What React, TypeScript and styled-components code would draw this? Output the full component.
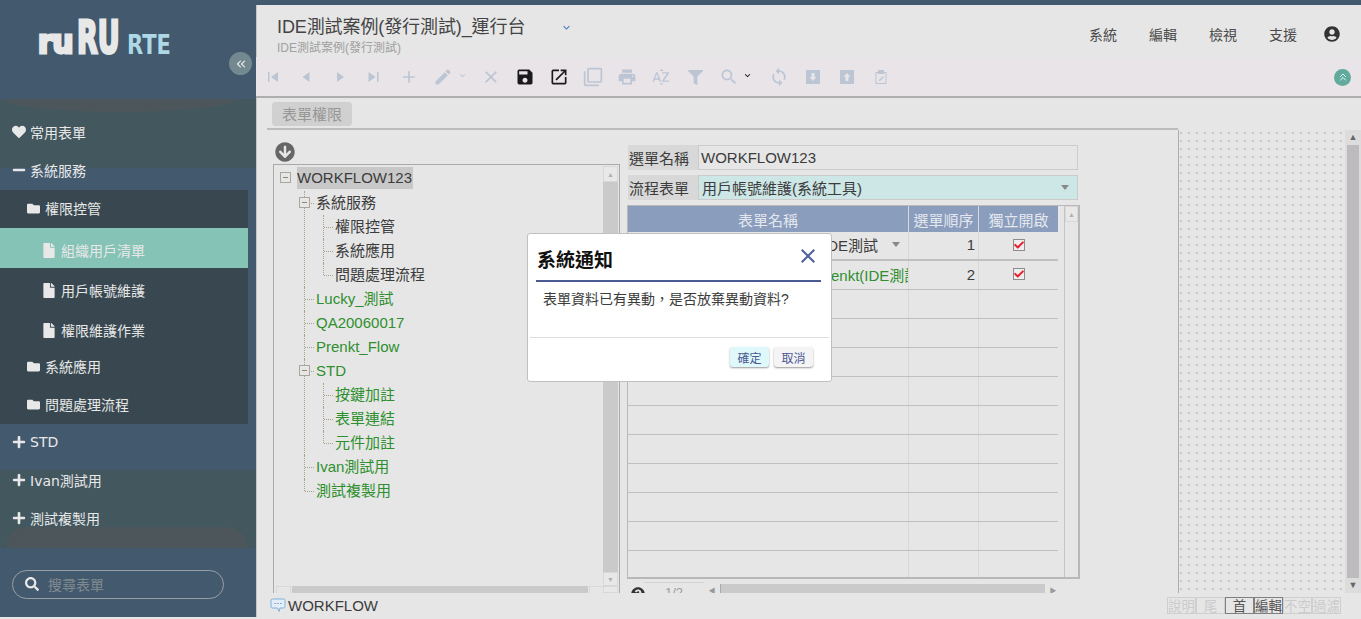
import React from "react";
import styled, { createGlobalStyle } from "styled-components";
import { ChevronsLeft, ChevronsUp } from "lucide-react";
import {
  FaCheck,
  FaFile,
  FaFilter,
  FaFolder,
  FaHeart,
  FaMinus,
  FaPlus,
  FaSearch,
  FaUserCircle,
  FaArrowCircleDown,
  FaQuestionCircle,
} from "react-icons/fa";
import {
  MdAdd,
  MdClose,
  MdEdit,
  MdFilterNone,
  MdKeyboardArrowDown,
  MdOpenInNew,
  MdPrint,
  MdSave,
  MdSearch,
  MdSortByAlpha,
  MdSync,
} from "react-icons/md";

const FONT = `"Liberation Sans", "Noto Sans CJK TC", sans-serif`;

const GlobalStyle = createGlobalStyle`
  html, body {
    margin: 0;
    padding: 0;
    background: #e6e6e6;
    overflow: hidden;
  }
  * {
    box-sizing: border-box;
  }
  body {
    font-family: ${FONT};
  }
`;

const Page = styled.div`
  display: flex;
  width: 1361px;
  height: 617px;
  position: relative;
  overflow: hidden;
`;

/* ---------- sidebar ---------- */

const Sidebar = styled.aside`
  width: 256px;
  flex: none;
  display: flex;
  flex-direction: column;
  background: #43596e;
  color: #e8e8e8;
`;

const SideHead = styled.div`
  height: 99px;
  flex: none;
  position: relative;
`;

const LogoSvg = styled.svg`
  display: block;
`;

const CollapseButton = styled.div`
  position: absolute;
  left: 229px;
  top: 52px;
  width: 23px;
  height: 23px;
  border-radius: 50%;
  background: #74888f;
  color: #e8e8e8;
  display: flex;
  align-items: center;
  justify-content: center;
`;

const Menu = styled.nav`
  flex: none;
  height: 449px;
  padding-top: 15px;
  position: relative;
  background: linear-gradient(
    to bottom,
    #43575f 0,
    #43575f 69px,
    #43596e 69px,
    #43596e 371px,
    #43575f 371px,
    #43575f 100%
  );

  &::before {
    content: "";
    position: absolute;
    left: 4px;
    right: 20px;
    top: 0;
    height: 13px;
    background: #4d565a;
    border-radius: 0 0 50% 50% / 0 0 100% 100%;
  }

  &::after {
    content: "";
    position: absolute;
    left: 6px;
    right: 8px;
    bottom: 0;
    height: 21px;
    background: #4d565a;
    border-radius: 40px 40px 0 0;
  }
`;

const TopItem = styled.div`
  height: 38px;
  display: flex;
  align-items: center;
  padding: 0 0 2px 12px;
  gap: 4px;
  font-size: 14px;
  font-family: "DejaVu Sans", "Noto Sans CJK TC", sans-serif;
  position: relative;
  z-index: 1;

  svg {
    width: 14px;
    height: 14px;
    flex: none;
  }
`;

const SubPanel = styled.div`
  width: 248px;
  background: #394850;
`;

const FolderItem = styled.div`
  height: 38px;
  display: flex;
  align-items: center;
  padding: 0 0 2px 27px;
  gap: 5px;
  font-size: 14px;

  svg {
    width: 13px;
    height: 13px;
    flex: none;
  }
`;

const LeafItem = styled.div<{ $active?: boolean }>`
  height: 40px;
  padding: 4px 0 0 42px;
  display: flex;
  align-items: center;
  gap: 5px;
  font-size: 14px;
  background: ${(p) => (p.$active ? "#84c3b5" : "transparent")};

  svg {
    width: 14px;
    height: 15px;
    flex: none;
  }
`;

const SearchBox = styled.div`
  margin: 22px 0 0 12px;
  width: 212px;
  height: 29px;
  border: 1px solid #99a0a5;
  border-radius: 15px;
  display: flex;
  align-items: center;
  padding: 0 0 2px 12px;
  gap: 9px;
  font-size: 14px;
  color: #808a90;

  svg {
    color: #e8e8e8;
    width: 14px;
    height: 14px;
  }
`;

/* ---------- main ---------- */

const Main = styled.main`
  flex: 1;
  min-width: 0;
  display: flex;
  flex-direction: column;
  background: #e6e6e6;
  border-left: 1px solid #c4c4c4;
`;

const Stripe = styled.div`
  height: 5px;
  flex: none;
  margin-left: -1px;
  background: #43596e;
`;

const Header = styled.header`
  height: 52px;
  flex: none;
  display: flex;
  align-items: flex-start;
  justify-content: space-between;
  padding: 11px 21px 0 20px;
`;

const TitleBlock = styled.div`
  display: flex;
  flex-direction: column;
  gap: 2px;
`;

const TitleRow = styled.div`
  display: flex;
  align-items: center;
  gap: 35px;
  font-size: 18px;
  letter-spacing: -0.1px;
  line-height: 22px;
  color: #444;

  svg {
    color: #4a7fb0;
    font-size: 13px;
  }
`;

const Subtitle = styled.div`
  font-size: 12px;
  line-height: 16px;
  color: #a0a0a0;
`;

const TopNav = styled.div`
  display: flex;
  align-items: center;
  gap: 32px;
  padding-top: 8px;
  font-size: 14px;
  color: #4a4a4a;
`;

const UserIcon = styled(FaUserCircle)`
  font-size: 16px;
  color: #333;
  margin-left: -5px;
`;

const Toolbar = styled.div`
  height: 41px;
  flex: none;
  display: flex;
  align-items: center;
  margin-left: -1px;
  background: #e8e4e8;
  border-bottom: 2px solid #aeaeae;
  padding-top: 1px;
`;

const ToolButton = styled.div<{ $width?: number; $on?: boolean }>`
  width: ${(p) => p.$width ?? 34}px;
  flex: none;
  height: 22px;
  display: flex;
  align-items: center;
  justify-content: ${(p) => (p.$width ? "flex-start" : "center")};
  padding-left: ${(p) => (p.$width ? 7 : 0)}px;
  font-size: 20px;
  color: ${(p) => (p.$on ? "#1a1a1a" : "#bcc5d3")};
`;

const Caret = styled(MdKeyboardArrowDown)<{ $dark?: boolean }>`
  font-size: 11px;
  margin-left: ${(p) => (p.$dark ? 3 : 4)}px;
  margin-top: -3px;
  color: ${(p) => (p.$dark ? "#111" : "#bcc5d3")};
`;

const FoldButton = styled.div`
  margin-left: auto;
  margin-right: 10px;
  width: 17px;
  height: 17px;
  border-radius: 50%;
  background: #62aa9c;
  color: #dff;
  display: flex;
  align-items: center;
  justify-content: center;
`;

const TabRow = styled.div`
  height: 32px;
  flex: none;
  margin-left: 10px;
  width: 911px;
  padding: 4px 0 0 5px;
  border-bottom: 2px solid #bcbcbc;
`;

const Tab = styled.div`
  width: 80px;
  height: 24px;
  padding-bottom: 1px;
  background: #d0d0d0;
  border-radius: 4px;
  color: #969696;
  font-size: 15px;
  display: flex;
  align-items: center;
  justify-content: center;
`;

const Body = styled.div`
  height: 463px;
  flex: none;
  display: flex;
  overflow: hidden;
`;

const Workspace = styled.div`
  width: 921px;
  flex: none;
  display: flex;
  padding-left: 16px;
  gap: 7px;
`;

const TreeColumn = styled.div`
  width: 347px;
  flex: none;
  display: flex;
  flex-direction: column;
`;

const DownloadIcon = styled(FaArrowCircleDown)`
  flex: none;
  margin: 12px 0 2px 2px;
  font-size: 20px;
  color: #666;
`;

const TreeBox = styled.div`
  flex: 1;
  height: 440px;
  border: 1px solid #aaa;
  border-bottom: none;
  display: flex;
  position: relative;
`;

const TreeScroll = styled.div`
  flex: 1;
  padding-top: 1px;
`;

const VScroll = styled.div`
  width: 15px;
  flex: none;
  margin: 1px 1px 0 0;
  display: flex;
  flex-direction: column;
  background: #e6e6e6;
`;

const ScrollBtn = styled.div<{ $h?: number }>`
  height: ${(p) => p.$h ?? 16}px;
  flex: none;
  background: #e8e8e8;
  border: 1px solid #d8d8d8;
  display: flex;
  align-items: center;
  justify-content: center;
  color: #b0b0b0;
  font-size: 7px;
  line-height: 1;
`;

const ScrollThumb = styled.div`
  flex: 1;
  background: #cacaca;
`;

const HScroll = styled.div`
  position: absolute;
  left: 2px;
  right: 15px;
  bottom: 0;
  height: 7px;
  display: flex;
`;

const HEnd = styled.div`
  width: 15px;
  flex: none;
  border: 1px solid #d8d8d8;
  border-bottom: none;
`;

const HThumb = styled.div`
  flex: 1;
  background: #cacaca;
  margin: 0 1px;
`;

const TreeRoot = styled.ul`
  list-style: none;
  margin: 0;
  padding: 0 0 0 23px;
  font-size: 15px;
`;

const RootNode = styled.li`
  position: relative;
`;

const Branch = styled.ul<{ $indent: number }>`
  list-style: none;
  margin: 0 0 0 ${(p) => p.$indent}px;
  padding: 0;
`;

const Node = styled.li`
  position: relative;
  padding-left: 12px;

  &::before {
    content: "";
    position: absolute;
    left: 0;
    top: 0;
    bottom: 0;
    border-left: 1px dotted #a6a28e;
  }

  &:last-child::before {
    bottom: auto;
    height: 12px;
  }

  &::after {
    content: "";
    position: absolute;
    left: 1px;
    top: 12px;
    width: 9px;
    border-top: 1px dotted #a6a28e;
  }
`;

const NodeLabel = styled.div<{ $green?: boolean }>`
  height: 24px;
  line-height: 24px;
  white-space: nowrap;
  color: ${(p) => (p.$green ? "#2e8f2e" : "#3c3c3c")};
`;

const RootLabel = styled.span`
  display: inline-block;
  height: 22px;
  line-height: 22px;
  margin: 1px 0 2px;
  background: #c8c8c8;
  color: #3c3c3c;
  padding-right: 1px;
`;

const Expander = styled.span<{ $root?: boolean }>`
  position: absolute;
  z-index: 1;
  left: ${(p) => (p.$root ? -17 : -5)}px;
  top: 6px;
  width: 11px;
  height: 11px;
  background: #e6e6e6;
  border: 1px solid #aaa69a;

  &::after {
    content: "";
    position: absolute;
    left: 2px;
    right: 2px;
    top: 4px;
    border-top: 1px solid #8a867a;
  }
`;

const FormColumn = styled.div`
  width: 453px;
  flex: none;
  padding-top: 15px;
  display: flex;
  flex-direction: column;
`;

const FieldRow = styled.div`
  display: flex;
  flex: none;
  height: 25px;
  margin: 0 2px 5px 1px;
  font-size: 15px;
  color: #3c3c3c;
`;

const FieldLabel = styled.div`
  width: 70px;
  flex: none;
  background: #d8d8d8;
  display: flex;
  align-items: center;
  padding: 0 0 1px 1px;
`;

const FieldValue = styled.div<{ $select?: boolean }>`
  flex: 1;
  border: 1px solid #cbcbcb;
  background: ${(p) => (p.$select ? "#cde6e6" : "transparent")};
  display: flex;
  align-items: center;
  justify-content: space-between;
  padding: 0 8px 1px ${(p) => (p.$select ? 3 : 2)}px;
`;

const DropMark = styled.span`
  width: 0;
  height: 0;
  flex: none;
  border-left: 4px solid transparent;
  border-right: 4px solid transparent;
  border-top: 5px solid #888;
`;

const TableFrame = styled.div`
  height: 374px;
  flex: none;
  border: 2px solid #b8b8b8;
  border-top-width: 1px;
  border-left-width: 1px;
  display: flex;
`;

const TableArea = styled.div`
  width: 430px;
  flex: none;
  overflow: hidden;
  font-size: 15px;
  color: #3c3c3c;
`;

const HeadRow = styled.div`
  height: 26px;
  display: grid;
  grid-template-columns: 280px 70px 80px;
  background: #8a9dbd;
  color: #e4e8ee;
`;

const HeadCell = styled.div`
  display: flex;
  align-items: center;
  justify-content: center;
  border-left: 1px solid #d8d8d8;

  &:first-child {
    border-left: none;
  }
`;

const DataRow = styled.div<{ $thick?: boolean }>`
  height: 29px;
  display: grid;
  grid-template-columns: 280px 70px 80px;
  border-bottom: ${(p) => (p.$thick ? "2px" : "1px")} solid #c0c0c0;
`;

const Cell = styled.div<{ $align?: string; $green?: boolean }>`
  min-width: 0;
  overflow: hidden;
  white-space: nowrap;
  display: flex;
  align-items: center;
  justify-content: ${(p) => p.$align ?? "flex-start"};
  padding: 0 3px 2px;
  color: ${(p) => (p.$green ? "#2e8f2e" : "inherit")};
  border-left: 1px solid #d8d8d8;

  &:first-child {
    border-left: none;
  }
`;

const NameSelect = styled(Cell)`
  justify-content: flex-end;
  gap: 14px;
  padding-right: 8px;
`;

const CheckBox = styled.span`
  width: 12px;
  height: 12px;
  border: 1px solid #8c8c8c;
  display: flex;
  align-items: center;
  justify-content: center;
  color: #e8202c;
  font-size: 10px;
  background: #eee;
`;

const TableScroll = styled.div`
  margin-left: 6px;
  width: 14px;
  flex: none;
  border-left: 1px solid #c4c4c4;
`;

const Pager = styled.div`
  display: flex;
  flex: none;
  align-items: flex-start;
  margin-top: 3px;
  height: 20px;
  font-size: 13px;
  color: #9a9a9a;

  svg {
    font-size: 14px;
    color: #333;
    margin: 5px 0 0 4px;
    flex: none;
  }
`;

const PageBox = styled.div`
  width: 60px;
  margin-left: -1px;
  padding-top: 3px;
  text-align: center;
  border-top: 1px solid #d4d4d4;
  line-height: 14px;
`;

const PagerStep = styled.div`
  width: 16px;
  margin-top: 3px;
  font-size: 7px;
  text-align: center;
`;

const PagerTrack = styled.div`
  width: 325px;
  height: 14px;
  margin-top: 2px;
  background: #cacaca;
  border-left: 1px solid #aaa;
`;

const DotPanel = styled.div`
  width: 167px;
  flex: none;
  border-left: 1px solid #aeaeae;
  background-color: #e6e6e6;
  background-image: radial-gradient(circle at 1px 1px, #c6c6c6 1.4px, transparent 1.5px);
  background-size: 8px 8px;
  background-position: 1px 2px;
`;

const PageScroll = styled.div`
  width: 16px;
  flex: none;
  background: #dcdcdc;
  display: flex;
  flex-direction: column;
  align-items: center;
`;

const PageArrow = styled.div`
  height: 15px;
  flex: none;
  display: flex;
  align-items: center;
  justify-content: center;
  font-size: 9px;
  color: #666;
  line-height: 1;
`;

const PageThumb = styled.div`
  flex: 1;
  width: 12px;
  background: #bdbbbd;
`;

const StatusBar = styled.footer`
  flex: 1;
  display: flex;
  align-items: center;
  justify-content: space-between;
  padding: 0 20px 0 13px;
  font-size: 15px;
  color: #3c3c3c;
`;

const StatusLabel = styled.div`
  display: flex;
  align-items: center;
  gap: 2px;
`;

const KeyGroup = styled.div`
  display: flex;
`;

const Key = styled.div<{ $on?: boolean }>`
  width: 29px;
  height: 17px;
  display: flex;
  align-items: center;
  justify-content: center;
  font-size: 13.5px;
  white-space: nowrap;
  border: 1px solid ${(p) => (p.$on ? "#808080" : "#cfcfcf")};
  color: ${(p) => (p.$on ? "#555" : "#cbcbcb")};
`;

/* ---------- dialog ---------- */

const Dialog = styled.div`
  position: absolute;
  left: 527px;
  top: 233px;
  width: 305px;
  height: 149px;
  background: #fff;
  border: 1px solid #c0c0c0;
  border-radius: 3px;
  display: flex;
  flex-direction: column;
  color: #3c3c3c;
`;

const DialogHead = styled.div`
  height: 48px;
  flex: none;
  margin: 0 10px 0 8px;
  padding: 3px 1px 0 1px;
  border-bottom: 2px solid #4c5a94;
  display: flex;
  align-items: center;
  justify-content: space-between;
  font-size: 19px;
  font-weight: 700;
  color: #111;

  svg {
    color: #4f5f9c;
    font-size: 24px;
    margin-top: -5px;
  }
`;

const DialogText = styled.div`
  flex: 1;
  padding: 8px 0 0 15px;
  font-size: 14px;
  line-height: 18px;
`;

const DialogFoot = styled.div`
  height: 44px;
  flex: none;
  margin: 0 2px;
  border-top: 1px solid #dcdcdc;
  display: flex;
  justify-content: flex-end;
  gap: 5px;
  padding: 9px 16px 0 0;
`;

const DialogButton = styled.button<{ $primary?: boolean }>`
  width: 39px;
  height: 20px;
  padding: 0;
  border: none;
  border-radius: 3px;
  background: ${(p) => (p.$primary ? "#dff8fa" : "#f4f4f4")};
  box-shadow: 0 1px 2px #999;
  color: #4c5a94;
  font-family: ${FONT};
  font-size: 12px;
`;

/* ---------- toolbar glyphs ---------- */

const Glyph = ({ d, size = 16 }: { d: string; size?: number }) => (
  <svg width={size} height={size} viewBox="0 0 16 16" fill="currentColor" fillRule="evenodd">
    <path d={d} />
  </svg>
);

const BOX_DOWN = "M1 1h14v14H1zM6.500 4v4H4.500L8 12l3.500-4H9.500V4z";
const BOX_UP = "M1 1h14v14H1zM6.500 12V8H4.500L8 4l3.500 4H9.500v4z";
const CLIP =
  "M5 1h6v2h2.500v12h-11V3H5zM3.500 4v10h9V4H11v1H5V4zM10 7l1 1-4 4H6v-1z";

const treeGreen = ["Lucky_測試", "QA20060017", "Prenkt_Flow"];

export default function App() {
  return (
    <>
      <GlobalStyle />
      <Page>
        <Sidebar>
          <SideHead>
            <LogoSvg width="200" height="70" viewBox="0 0 200 70">
              <g fontFamily="DejaVu Sans" fontWeight="700">
                <text
                  transform="translate(38 53) scale(0.92 1)"
                  fontSize="32"
                  fill="#e8e8e8"
                  stroke="#e8e8e8"
                  strokeWidth="3"
                >
                  ru
                </text>
                <text
                  transform="translate(77 53) scale(0.6 1)"
                  fontSize="45"
                  fill="#e8e8e8"
                  stroke="#e8e8e8"
                  strokeWidth="3"
                >
                  RU
                </text>
                <text transform="translate(127 54) scale(0.78 1)" fontSize="27" fill="#add8e6">
                  RTE
                </text>
              </g>
            </LogoSvg>
            <CollapseButton>
              <ChevronsLeft size={14} />
            </CollapseButton>
          </SideHead>

          <Menu>
            <TopItem>
              <FaHeart />
              常用表單
            </TopItem>
            <TopItem>
              <FaMinus />
              系統服務
            </TopItem>
            <SubPanel>
              <FolderItem>
                <FaFolder />
                權限控管
              </FolderItem>
              <LeafItem $active>
                <FaFile />
                組織用戶清單
              </LeafItem>
              <LeafItem>
                <FaFile />
                用戶帳號維護
              </LeafItem>
              <LeafItem>
                <FaFile />
                權限維護作業
              </LeafItem>
              <FolderItem>
                <FaFolder />
                系統應用
              </FolderItem>
              <FolderItem>
                <FaFolder />
                問題處理流程
              </FolderItem>
            </SubPanel>
            <TopItem>
              <FaPlus />
              STD
            </TopItem>
            <TopItem>
              <FaPlus />
              Ivan測試用
            </TopItem>
            <TopItem>
              <FaPlus />
              測試複製用
            </TopItem>
          </Menu>

          <SearchBox>
            <FaSearch />
            搜尋表單
          </SearchBox>
        </Sidebar>

        <Main>
          <Stripe />
          <Header>
            <TitleBlock>
              <TitleRow>
                IDE測試案例(發行測試)_運行台
                <MdKeyboardArrowDown />
              </TitleRow>
              <Subtitle>IDE測試案例(發行測試)</Subtitle>
            </TitleBlock>
            <TopNav>
              <span>系統</span>
              <span>編輯</span>
              <span>檢視</span>
              <span>支援</span>
              <UserIcon />
            </TopNav>
          </Header>

          <Toolbar>
            <ToolButton>
              <Glyph d="M3 3h1.500v10H3zM13 3v10L6 8z" />
            </ToolButton>
            <ToolButton>
              <Glyph d="M10.500 3v10L3.500 8z" />
            </ToolButton>
            <ToolButton>
              <Glyph d="M4 3v10l7-5z" />
            </ToolButton>
            <ToolButton>
              <Glyph d="M1.500 3v10l7-5zM10 3h1.500v10H10z" />
            </ToolButton>
            <ToolButton>
              <MdAdd />
            </ToolButton>
            <ToolButton $width={48}>
              <MdEdit />
              <Caret />
            </ToolButton>
            <ToolButton>
              <MdClose />
            </ToolButton>
            <ToolButton $on>
              <MdSave />
            </ToolButton>
            <ToolButton $on>
              <MdOpenInNew />
            </ToolButton>
            <ToolButton>
              <MdFilterNone />
            </ToolButton>
            <ToolButton>
              <MdPrint />
            </ToolButton>
            <ToolButton>
              <MdSortByAlpha />
            </ToolButton>
            <ToolButton>
              <FaFilter size={15} />
            </ToolButton>
            <ToolButton $width={50}>
              <MdSearch />
              <Caret $dark />
            </ToolButton>
            <ToolButton>
              <MdSync />
            </ToolButton>
            <ToolButton>
              <Glyph d={BOX_DOWN} />
            </ToolButton>
            <ToolButton>
              <Glyph d={BOX_UP} />
            </ToolButton>
            <ToolButton>
              <Glyph d={CLIP} />
            </ToolButton>
            <FoldButton>
              <ChevronsUp size={12} />
            </FoldButton>
          </Toolbar>

          <TabRow>
            <Tab>表單權限</Tab>
          </TabRow>

          <Body>
            <Workspace>
              <TreeColumn>
                <DownloadIcon />
                <TreeBox>
                  <TreeScroll>
                    <TreeRoot>
                      <RootNode>
                        <Expander $root />
                        <RootLabel>WORKFLOW123</RootLabel>
                        <Branch $indent={7}>
                          <Node>
                            <Expander />
                            <NodeLabel>系統服務</NodeLabel>
                            <Branch $indent={7}>
                              <Node>
                                <NodeLabel>權限控管</NodeLabel>
                              </Node>
                              <Node>
                                <NodeLabel>系統應用</NodeLabel>
                              </Node>
                              <Node>
                                <NodeLabel>問題處理流程</NodeLabel>
                              </Node>
                            </Branch>
                          </Node>
                          {treeGreen.map((name) => (
                            <Node key={name}>
                              <NodeLabel $green>{name}</NodeLabel>
                            </Node>
                          ))}
                          <Node>
                            <Expander />
                            <NodeLabel $green>STD</NodeLabel>
                            <Branch $indent={7}>
                              <Node>
                                <NodeLabel $green>按鍵加註</NodeLabel>
                              </Node>
                              <Node>
                                <NodeLabel $green>表單連結</NodeLabel>
                              </Node>
                              <Node>
                                <NodeLabel $green>元件加註</NodeLabel>
                              </Node>
                            </Branch>
                          </Node>
                          <Node>
                            <NodeLabel $green>Ivan測試用</NodeLabel>
                          </Node>
                          <Node>
                            <NodeLabel $green>測試複製用</NodeLabel>
                          </Node>
                        </Branch>
                      </RootNode>
                    </TreeRoot>
                  </TreeScroll>
                  <VScroll>
                    <ScrollBtn>▲</ScrollBtn>
                    <ScrollThumb />
                    <ScrollBtn $h={14}>▼</ScrollBtn>
                    <ScrollBtn $h={7} />
                  </VScroll>
                  <HScroll>
                    <HEnd />
                    <HThumb />
                    <HEnd />
                  </HScroll>
                </TreeBox>
              </TreeColumn>

              <FormColumn>
                <FieldRow>
                  <FieldLabel>選單名稱</FieldLabel>
                  <FieldValue>WORKFLOW123</FieldValue>
                </FieldRow>
                <FieldRow>
                  <FieldLabel>流程表單</FieldLabel>
                  <FieldValue $select>
                    用戶帳號維護(系統工具)
                    <DropMark />
                  </FieldValue>
                </FieldRow>
                <TableFrame>
                  <TableArea>
                    <HeadRow>
                      <HeadCell>表單名稱</HeadCell>
                      <HeadCell>選單順序</HeadCell>
                      <HeadCell>獨立開啟</HeadCell>
                    </HeadRow>
                    <DataRow $thick>
                      <NameSelect>
                        用戶帳號維護(IDE測試
                        <DropMark />
                      </NameSelect>
                      <Cell $align="flex-end">1</Cell>
                      <Cell $align="center">
                        <CheckBox>
                          <FaCheck />
                        </CheckBox>
                      </Cell>
                    </DataRow>
                    <DataRow>
                      <Cell $green>流程表單測試用戶帳號維護-Prenkt(IDE測試案例)</Cell>
                      <Cell $align="flex-end">2</Cell>
                      <Cell $align="center">
                        <CheckBox>
                          <FaCheck />
                        </CheckBox>
                      </Cell>
                    </DataRow>
                    {Array.from({ length: 10 }, (_, i) => (
                      <DataRow key={i}>
                        <Cell />
                        <Cell />
                        <Cell />
                      </DataRow>
                    ))}
                  </TableArea>
                  <TableScroll>
                    <ScrollBtn>▲</ScrollBtn>
                  </TableScroll>
                </TableFrame>
                <Pager>
                  <FaQuestionCircle />
                  <PageBox>1/2</PageBox>
                  <PagerStep>◀</PagerStep>
                  <PagerTrack />
                  <PagerStep>▶</PagerStep>
                </Pager>
              </FormColumn>
            </Workspace>

            <DotPanel />
            <PageScroll>
              <PageArrow>▲</PageArrow>
              <PageThumb />
              <PageArrow>▼</PageArrow>
            </PageScroll>
          </Body>

          <StatusBar>
            <StatusLabel>
              <svg width="16" height="16" viewBox="0 0 16 16">
                <path
                  d="M2.500 2h11A1.500 1.500 0 0 1 15 3.500v6a1.500 1.500 0 0 1-1.500 1.500H10l-1 3.500L7.500 11h-5A1.500 1.500 0 0 1 1 9.500v-6A1.500 1.500 0 0 1 2.500 2z"
                  fill="#e3eef8"
                  stroke="#7fb0dc"
                />
                <path d="M4.500 6.500h1.200M7.400 6.500h1.200M10.300 6.500h1.200" stroke="#5a86b0" />
              </svg>
              WORKFLOW
            </StatusLabel>
            <KeyGroup>
              <Key>說明</Key>
              <Key>尾</Key>
              <Key $on>首</Key>
              <Key $on>編輯</Key>
              <Key>不空</Key>
              <Key>過濾</Key>
            </KeyGroup>
          </StatusBar>
        </Main>

        <Dialog>
          <DialogHead>
            系統通知
            <MdClose />
          </DialogHead>
          <DialogText>表單資料已有異動，是否放棄異動資料?</DialogText>
          <DialogFoot>
            <DialogButton $primary>確定</DialogButton>
            <DialogButton>取消</DialogButton>
          </DialogFoot>
        </Dialog>
      </Page>
    </>
  );
}
